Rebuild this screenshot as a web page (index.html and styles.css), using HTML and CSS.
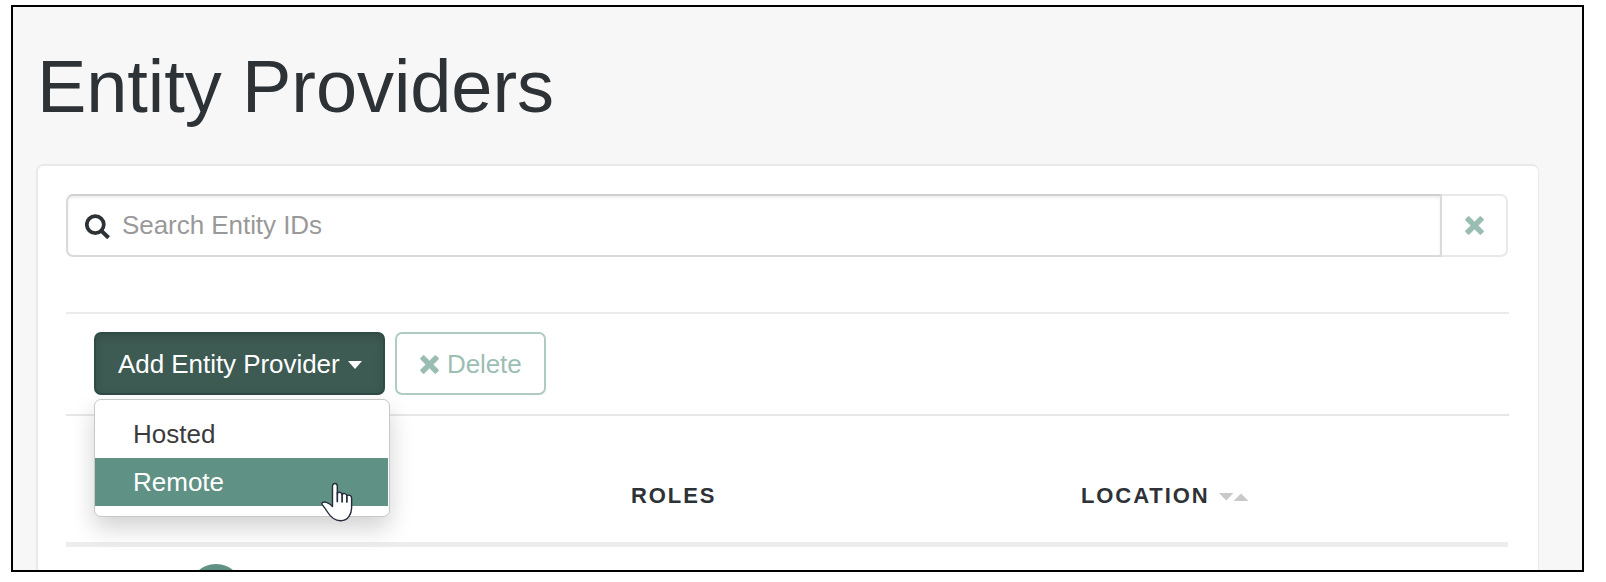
FILE: index.html
```
<!DOCTYPE html>
<html lang="en">
<head>
<meta charset="utf-8">
<title>Entity Providers</title>
<link rel="stylesheet" href="styles.css">
</head>
<body>
<main class="frame">
  <h1 class="title">Entity Providers</h1>
  <section class="card">
    <div class="search">
      <div class="search-field">
        <svg class="search-icon" viewBox="0 0 25 25"><circle cx="10.3" cy="10.6" r="8.5" fill="none" stroke="#2d3236" stroke-width="3.7"/><path d="M16.5 17l5.6 5.4" stroke="#2d3236" stroke-width="4" stroke-linecap="square"/></svg>
        <span class="placeholder">Search Entity IDs</span>
      </div>
      <div class="search-clear">
        <svg class="cross" viewBox="0 0 19 19"><path d="M4.2 .8L9.5 6L14.8 .8Q15.4 .4 16 .8L18.3 3.1Q18.8 3.7 18.3 4.3L13 9.5L18.3 14.7Q18.8 15.3 18.3 15.9L16 18.2Q15.4 18.6 14.8 18.2L9.5 13L4.2 18.2Q3.6 18.6 3 18.2L.7 15.9Q.2 15.3 .7 14.7L6 9.5L.7 4.3Q.2 3.7 .7 3.1L3 .8Q3.6 .4 4.2 .8Z"/></svg>
      </div>
    </div>
    <div class="toolbar">
      <div class="dropdown">
        <div class="btn btn-primary"><span class="add-label">Add Entity Provider</span><span class="caret"></span></div>
        <div class="menu">
          <div class="item">Hosted</div>
          <div class="item active">Remote</div>
          <svg class="pointer" viewBox="0 0 32 40"><path d="M11.5 24.5V4.2C11.5 .6 16.3 .6 16.3 4.2V11.2C17.5 9.8 20.5 10 21.1 12.2C22.5 11 25.4 11.5 25.9 13.6C27.7 12.6 30.6 13.4 30.6 16V25.5C30.6 30.8 27.8 38.7 19.6 38.7C12.8 38.7 9 34.2 6.1 29.5C4.2 26.3 2.4 24.4 1.2 22.6C.1 20.8 2.7 19.4 5.4 20.4C8.1 21.2 9.8 22.5 11.5 24.5Z" fill="#fff" stroke="#252b3a" stroke-width="1.4" stroke-linejoin="round"/><path d="M16.3 11V19.5M21.1 12V19.8M25.9 13.6V20" stroke="#252b3a" stroke-width="1.7" stroke-linecap="round"/></svg>
        </div>
      </div>
      <div class="btn btn-outline">
        <svg class="cross" viewBox="0 0 19 19"><path d="M4.2 .8L9.5 6L14.8 .8Q15.4 .4 16 .8L18.3 3.1Q18.8 3.7 18.3 4.3L13 9.5L18.3 14.7Q18.8 15.3 18.3 15.9L16 18.2Q15.4 18.6 14.8 18.2L9.5 13L4.2 18.2Q3.6 18.6 3 18.2L.7 15.9Q.2 15.3 .7 14.7L6 9.5L.7 4.3Q.2 3.7 .7 3.1L3 .8Q3.6 .4 4.2 .8Z"/></svg>
        <span class="delete-label">Delete</span>
      </div>
    </div>
    <div class="table-head">
      <div></div>
      <div class="th">ROLES</div>
      <div class="th">LOCATION<svg class="sort" viewBox="0 0 30 8"><path d="M0 0H14.5L7.25 7.5ZM14.5 8H29.5L22 .5Z" fill="#c9c9c9"/></svg></div>
    </div>
    <div class="table-row"><span class="avatar"></span></div>
  </section>
</main>
</body>
</html>
```
FILE: styles.css
```
* { box-sizing: border-box; }
body { margin: 0; background: #fff; overflow: hidden; font-family: "Liberation Sans", Arial, sans-serif; font-size: 26px; color: #2d3236; }
svg { display: block; flex: none; }
.frame { width: 1573px; height: 567px; margin: 5px 0 0 11px; border: 2px solid #000; background: #f7f7f7; overflow: hidden; padding: 0 43px 0 23px; }
.title { margin: 0; height: 157px; padding: 38px 0 0 1px; font-size: 74px; line-height: 84px; font-weight: 400; letter-spacing: -0.08px; white-space: nowrap; }
.card { height: 500px; border: 2px solid #e9e9e9; border-right-width: 1px; border-radius: 7px; background: #fff; padding: 28px 28px 0; }
.search { display: flex; width: 1442px; height: 63px; }
.search-field { width: 1376px; border: 2px solid #dadada; border-top-color: #d0d0d0; border-radius: 7px 0 0 7px; box-shadow: inset 0 2px 3px rgba(0,0,0,.07); display: flex; align-items: center; padding-left: 17px; }
.search-icon { width: 25px; height: 25px; margin-top: 2px; }
.placeholder { margin-left: 12px; margin-top: -2px; line-height: 30px; color: #999; letter-spacing: -0.05px; }
.search-clear { flex: 1; border: 2px solid #e9e9e9; border-left: 0; border-radius: 0 7px 7px 0; display: flex; align-items: center; justify-content: center; }
.cross { width: 19px; height: 19px; fill: #99bcb3; stroke: #99bcb3; stroke-width: .8; stroke-linejoin: round; }
.toolbar { width: 1443px; height: 104px; margin-top: 55px; border-top: 2px solid #ebebeb; border-bottom: 2px solid #e7e7e7; padding: 18px 0 0 28px; display: flex; gap: 10px; }
.dropdown { position: relative; width: 291px; }
.btn { height: 63px; border-radius: 7px; display: flex; align-items: center; white-space: nowrap; }
.btn-primary { background: #3d5a53; border: 2px solid #304a44; color: #fff; padding-left: 22px; box-shadow: inset 0 4px 8px rgba(0,0,0,.12); }
.add-label { padding-top: 2px; letter-spacing: -0.05px; }
.caret { margin-left: 8px; margin-top: 2px; border: 7px solid transparent; border-top: 8px solid #fff; border-bottom: 0; }
.btn-outline { width: 151px; border: 2px solid #b0cbc4; color: #9cbeb5; padding-left: 23px; }
.btn-outline .cross { margin-top: 2px; }
.delete-label { margin-left: 8px; padding-top: 2px; letter-spacing: -0.1px; }
.menu { position: absolute; left: 0; top: 67px; width: 296px; height: 118px; padding-top: 10px; background: #fff; border: 1px solid #c8c8c8; border-radius: 7px; box-shadow: 0 11px 23px rgba(0,0,0,.18); z-index: 1; }
.item { height: 48px; line-height: 49px; padding-left: 38px; color: #3b3b3b; }
.item.active { background: #5f9184; color: #fff; margin-right: 1px; }
.pointer { position: absolute; left: 226px; top: 82px; width: 32px; height: 40px; }
.table-head { width: 1442px; height: 131px; border-bottom: 5px solid #ededed; display: grid; grid-template-columns: 565px 450px 1fr; padding-top: 68px; }
.th { display: flex; align-items: center; height: 24px; font-size: 22px; font-weight: 700; letter-spacing: 1.9px; }
.sort { width: 30px; height: 8px; margin-left: 10px; margin-top: 2px; }
.table-row { padding: 17px 0 0 123px; }
.avatar { display: block; width: 54px; height: 54px; border-radius: 50%; background: #5f9184; }
```
